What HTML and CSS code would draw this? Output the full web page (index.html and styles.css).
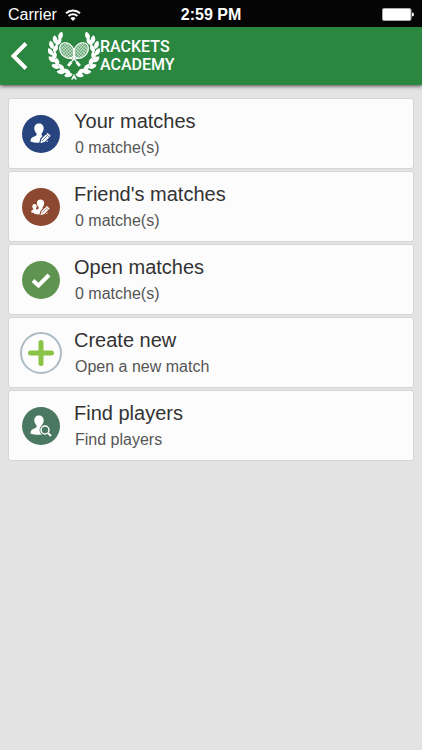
FILE: index.html
```html
<!doctype html>
<html lang="en">
<head>
  <meta charset="UTF-8">
  <title>Rackets Academy</title>
  <meta name="viewport" content="width=device-width, initial-scale=1.0">
  <link rel="stylesheet" href="styles.css">
</head>
<body>

  <svg width="0" height="0" class="defs" aria-hidden="true">
    <defs>
      <path id="leaf" d="M0 -4.4 C3 -2 3 2 0 4.2 C-3 2 -3 -2 0 -4.4Z"/>
      <g id="branch">
        <use href="#leaf" transform="translate(12.5 5) rotate(20)"/>
        <use href="#leaf" transform="translate(7 8.5) rotate(-8)"/>
        <use href="#leaf" transform="translate(10.5 11) rotate(42)"/>
        <use href="#leaf" transform="translate(3.5 14) rotate(-20)"/>
        <use href="#leaf" transform="translate(7.5 17.5) rotate(25)"/>
        <use href="#leaf" transform="translate(2.5 21) rotate(-32)"/>
        <use href="#leaf" transform="translate(6.5 24.5) rotate(8)"/>
        <use href="#leaf" transform="translate(4 28.5) rotate(-50)"/>
        <use href="#leaf" transform="translate(9 31) rotate(-12)"/>
        <use href="#leaf" transform="translate(7.5 35.5) rotate(-68)"/>
        <use href="#leaf" transform="translate(13.5 36.5) rotate(-35)"/>
        <use href="#leaf" transform="translate(13 41) rotate(-85)"/>
        <use href="#leaf" transform="translate(19 40.5) rotate(-55)"/>
        <use href="#leaf" transform="translate(20.5 44) rotate(-100)"/>
      </g>
      <path id="person" d="M18 9.500c2.900 0 4.800 2 4.700 5-.1 2.200-1 3.600-2.100 4.900v1.800c.8 1.300 3.400 1.700 5.200 3.100 1 .9 1.200 2 1.200 3.200-2 .8-5 1.200-8.800 1.200-3.700 0-7-.2-8.700-1.200 0-2.100.8-3.500 2-4.200 1.700-1 3.400-1 4.100-2.300v-1.600c-1.200-1.300-2.200-2.700-2.300-4.900-.1-3 1.800-5 4.700-5z"/>
      <path id="pencil" d="M20 24.500l6.500-6.500 4 3.800-6.500 6.500-5.500 1.700z"/>
    </defs>
  </svg>

  <div class="status-bar">
    <div class="carrier">
      <span>Carrier</span>
      <svg width="16" height="12" viewBox="0 0 16 12" aria-hidden="true">
        <path d="M1 4.200a10.200 10.200 0 0 1 14 0M3.600 7a6.400 6.400 0 0 1 8.800 0" fill="none" stroke="#fff" stroke-width="2"/>
        <path d="M8 12L5.400 9.200a3.700 3.700 0 0 1 5.200 0z" fill="#fff"/>
      </svg>
    </div>
    <div class="clock">2:59 PM</div>
    <div class="battery">
      <svg width="32" height="13" viewBox="0 0 32 13" aria-hidden="true">
        <rect x=".5" y=".5" width="28.500" height="12" rx="1.500" fill="#fff" stroke="#aaa"/>
        <path d="M30 4.500q2 0 2 2t-2 2z" fill="#fff"/>
      </svg>
    </div>
  </div>

  <header class="top-bar">
    <a href="#" class="back" aria-label="Back">
      <svg width="18" height="28" viewBox="0 0 18 28" aria-hidden="true">
        <path d="M16 1.500L3.500 14 16 26.500" fill="none" stroke="#fff" stroke-width="4"/>
      </svg>
    </a>
    <a href="#" class="logo">
      <svg width="52" height="50" viewBox="0 0 52 50" fill="#fff" aria-hidden="true">
        <use href="#branch"/>
        <use href="#branch" transform="matrix(-1 0 0 1 52 0)"/>
        <path d="M26 43l3 5.500h-2l-1-2-1 2h-2z"/>
        <g fill="none" stroke="#fff">
          <g id="racket">
            <g transform="translate(19 19.500) rotate(-40)">
              <ellipse rx="6.500" ry="8.500" fill="#fff" fill-opacity=".25" stroke-width="1.200"/>
              <path d="M-4-6v12M-2-8v16M0-8V8M2-8v16M4-6v12M-5-5h10M-6-2.500h12M-6.500 0h13M-6 2.500h12M-5 5h10" stroke-width=".5"/>
              <path d="M-3.500 7L0 11.500 3.500 7M0 11v5" stroke-width="1.200"/>
              <path d="M0 15v5" stroke-width="2.800"/>
            </g>
          </g>
          <use href="#racket" transform="matrix(-1 0 0 1 52 0)"/>
        </g>
      </svg>
      <span class="logo-text">
        <span>RACKETS</span>
        <span>ACADEMY</span>
      </span>
    </a>
  </header>

  <main>
    <ul class="menu">
      <li>
        <a href="#" class="card">
          <svg class="icon" viewBox="0 0 42 42" aria-hidden="true">
            <circle cx="21" cy="21" r="19" fill="#27447f"/>
            <g transform="translate(1 1)">
              <use href="#person" fill="#fff"/>
              <use href="#pencil" fill="#fff" stroke="#27447f" stroke-width="1.200"/>
              <path d="M25 20l3.500 3.500M21 27l5-5" stroke="#27447f" stroke-width=".7"/>
            </g>
          </svg>
          <span class="text">
            <span class="title">Your matches</span>
            <span class="subtitle">0 matche(s)</span>
          </span>
        </a>
      </li>
      <li>
        <a href="#" class="card">
          <svg class="icon" viewBox="0 0 42 42" aria-hidden="true">
            <circle cx="21" cy="21" r="19" fill="#8c4830"/>
            <path d="M14.500 18c1.500 0 2.300 1.200 2.200 2.600 0 1-.4 1.700-.9 2.200.5 1 2.700 1 2.700 4.200-4 .3-6 0-7.500-1 0-1.500 2-2 2.500-3-.7-.6-1.200-1.400-1.200-2.400 0-1.400.7-2.600 2.200-2.600z" fill="#fff"/>
            <use href="#person" fill="#fff" transform="translate(6.500 6) scale(.78)"/>
            <g transform="translate(3 3) scale(.9)">
              <use href="#pencil" fill="#fff" stroke="#8c4830" stroke-width="1.200"/>
              <path d="M25 20l3.500 3.500M21 27l5-5" stroke="#8c4830" stroke-width=".7"/>
            </g>
          </svg>
          <span class="text">
            <span class="title">Friend's matches</span>
            <span class="subtitle">0 matche(s)</span>
          </span>
        </a>
      </li>
      <li>
        <a href="#" class="card">
          <svg class="icon" viewBox="0 0 42 42" aria-hidden="true">
            <circle cx="21" cy="21" r="19" fill="#5f9450"/>
            <path d="M13 21.500l5.500 5L29 16" fill="none" stroke="#fff" stroke-width="4"/>
          </svg>
          <span class="text">
            <span class="title">Open matches</span>
            <span class="subtitle">0 matche(s)</span>
          </span>
        </a>
      </li>
      <li>
        <a href="#" class="card">
          <svg class="icon" viewBox="0 0 42 42" aria-hidden="true">
            <circle cx="21" cy="21" r="20" fill="#fdfdfd" stroke="#adbbc5" stroke-width="2"/>
            <path d="M21 10.500v21M10.500 21h21" stroke="#8bc346" stroke-width="5" stroke-linecap="round"/>
          </svg>
          <span class="text">
            <span class="title">Create new</span>
            <span class="subtitle">Open a new match</span>
          </span>
        </a>
      </li>
      <li>
        <a href="#" class="card">
          <svg class="icon" viewBox="0 0 42 42" aria-hidden="true">
            <circle cx="21" cy="21" r="19" fill="#4b7860"/>
            <use href="#person" fill="#fff" transform="translate(1 1)"/>
            <circle cx="25" cy="25" r="5.500" fill="#4b7860"/>
            <circle cx="25" cy="25" r="4" fill="none" stroke="#fff" stroke-width="1.500"/>
            <path d="M28 28l3 3" stroke="#fff" stroke-width="2"/>
          </svg>
          <span class="text">
            <span class="title">Find players</span>
            <span class="subtitle">Find players</span>
          </span>
        </a>
      </li>
    </ul>
  </main>

</body>
</html>
```
FILE: styles.css
```css
* {
  box-sizing: border-box;
}
body {
  font-family: "Liberation Sans", Arial, sans-serif;
  margin: 0;
  background: #e3e3e3;
  color: #333;
}
a {
  color: inherit;
  text-decoration: none;
}
svg {
  display: block;
}
.defs {
  position: absolute;
}

/* status bar */
.status-bar {
  display: grid;
  grid-template-columns: 1fr auto 1fr;
  align-items: center;
  height: 27px;
  padding: 2px 8px 0;
  background: #050505;
  color: #fff;
  font-size: 16px;
  line-height: 24px;
}
.carrier {
  display: flex;
  align-items: center;
  gap: 8px;
}
.clock {
  font-weight: bold;
}
.battery {
  justify-self: end;
}

/* header */
.top-bar {
  display: flex;
  align-items: center;
  height: 58px;
  padding: 0 10px;
  background: #2b8740;
  color: #fff;
  box-shadow: 0 1px 4px rgba(0,0,0,0.7);
}
.back {
  padding-right: 20px;
}
.logo {
  display: flex;
  align-items: center;
}
.logo-text {
  display: flex;
  flex-direction: column;
  font-family: Roboto, sans-serif;
  font-size: 16px;
  font-weight: 500;
  line-height: 18px;
}

/* menu */
.menu {
  display: flex;
  flex-direction: column;
  gap: 2px;
  margin: 0;
  padding: 13px 8px;
  list-style: none;
}
.card {
  display: flex;
  align-items: center;
  gap: 12px;
  padding: 8px 11px 7px;
  background: #fcfcfc;
  border: 1px solid #d6d6d6;
  border-radius: 3px;
}
.icon {
  width: 42px;
  height: 42px;
  flex: none;
}
.text {
  display: flex;
  flex-direction: column;
}
.title {
  font-size: 20px;
  line-height: 28px;
}
.subtitle {
  padding-left: 1px;
  color: #555;
  font-size: 16px;
  line-height: 26px;
}
```
